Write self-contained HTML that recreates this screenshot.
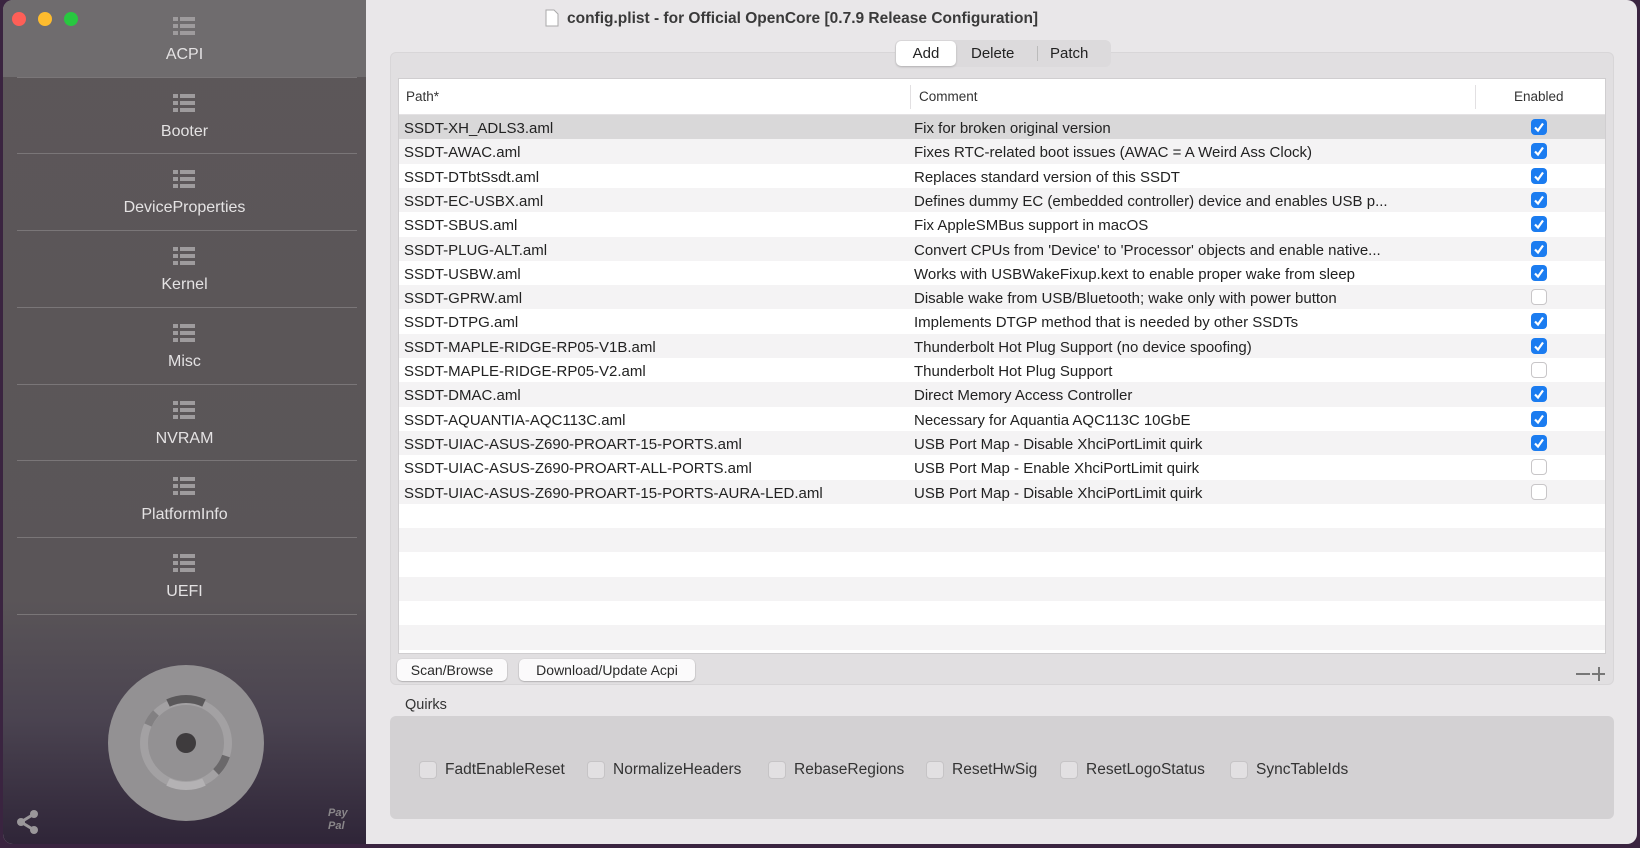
<!DOCTYPE html>
<html><head><meta charset="utf-8"><style>
*{box-sizing:border-box;margin:0;padding:0}
body{width:1640px;height:848px;overflow:hidden;background:#3a2440;font-family:"Liberation Sans",sans-serif;position:relative}
.a{position:absolute}
#win{left:3px;top:0;width:1634px;height:844px;border-radius:10px;overflow:hidden;background:#e9e7e9}
#side{left:0;top:0;width:363px;height:844px;background:linear-gradient(#5c5759 0,#5a5558 600px,#4a4350 720px,#2f2538 844px)}
.item{position:absolute;left:0;width:363px;height:77px;color:#e4e2e3;font-size:16px;text-align:center}
.item .lbl{position:absolute;left:0;right:0;top:46px}
.item .ic{position:absolute;left:170px;top:16px;width:22px;height:20px}
.sep{position:absolute;left:14px;width:340px;height:1px;background:#7a7678}
.tl{position:absolute;top:12px;width:14px;height:14px;border-radius:50%}
.row{position:absolute;left:0;width:1208px;height:24.3px;font-size:15px;color:#222;line-height:24.3px}
.row .p{position:absolute;left:5px;top:2px}
.row .c{position:absolute;left:515px;top:2px;white-space:nowrap}
.cb{position:absolute;left:1132px;top:4px;width:16px;height:16px;border-radius:4px}
.on{background:#1b7cf0}
.off{background:#fff;border:1px solid #c8c6c8}
.btn{position:absolute;top:659px;height:22px;background:#fbfafb;border-radius:5px;box-shadow:0 0.5px 1.5px rgba(0,0,0,.35);font-size:14px;color:#2a2a2a;text-align:center;line-height:22px}
.q{position:absolute;top:761px;font-size:15.5px;color:#333;line-height:18px;padding-left:26px}
.q:before{content:"";position:absolute;left:0;top:0;width:16px;height:16px;border-radius:4px;background:#e2e0e2;border:1px solid #c6c4c6}
</style></head><body>
<div id="win" class="a">
<div id="side" class="a">
 <div class="a" style="left:0;top:0;width:363px;height:77px;background:#6f6c6e"></div>
 <div class="tl" style="left:9px;background:#fe5f57"></div>
 <div class="tl" style="left:35px;background:#febc2e"></div>
 <div class="tl" style="left:61px;background:#28c840"></div>
 <div id="items"></div>
 <svg class="a" style="left:103px;top:663px" width="160" height="160" viewBox="0 0 160 160">
  <circle cx="80" cy="80" r="78" fill="#939193"/>
  <circle cx="80" cy="80" r="42" fill="none" stroke="#a3a1a3" stroke-width="8"/>
  <path d="M62 40 A42 42 0 0 1 98 40" fill="none" stroke="#5a585a" stroke-width="8"/>
  <path d="M62 119 A42 42 0 0 0 98 119" fill="none" stroke="#b4b2b4" stroke-width="8"/>
  <path d="M42 62 A42 42 0 0 1 50 50" fill="none" stroke="#828082" stroke-width="8"/>
  <path d="M120 93 A42 42 0 0 1 110 109" fill="none" stroke="#6a686a" stroke-width="8"/>
  <circle cx="80" cy="80" r="10" fill="#3e3b3d"/>
 </svg>
 <svg class="a" style="left:13px;top:810px" width="24" height="24" viewBox="0 0 24 24"><circle cx="5" cy="12" r="4" fill="#9a979a"/><circle cx="18" cy="4" r="4" fill="#9a979a"/><circle cx="18" cy="20" r="4" fill="#9a979a"/><path d="M5 12L18 4M5 12L18 20" stroke="#9a979a" stroke-width="3"/></svg>
 <div class="a" style="left:325px;top:807px;font-size:11px;font-style:italic;color:#8a878a;line-height:13px;font-weight:bold">Pay<br>Pal</div>
</div>
<svg class="a" style="left:542px;top:9px" width="14" height="18"><path d="M1 1h8l4 4v12H1z" fill="#fff" stroke="#aaa"/></svg>
<div class="a" style="left:564px;top:10px;font-size:15.5px;font-weight:bold;color:#3a3a3a">config.plist - for Official OpenCore [0.7.9 Release Configuration]</div>
<div class="a" style="left:387px;top:52px;width:1224px;height:633px;background:#e1dfe1;border-radius:6px;border:1px solid #d8d6d8"></div>
<div class="a" style="left:892px;top:40px;width:216px;height:27px;background:#dcdadc;border-radius:6px"></div>
<div class="a" style="left:893px;top:41px;width:60px;height:25px;background:#fff;border-radius:5px;box-shadow:0 1px 2px rgba(0,0,0,.2);font-size:15px;text-align:center;line-height:25px;color:#222">Add</div>
<div class="a" style="left:968px;top:41px;font-size:15px;line-height:25px;color:#222">Delete</div>
<div class="a" style="left:1034px;top:46px;width:1px;height:15px;background:#bbb"></div>
<div class="a" style="left:1047px;top:41px;font-size:15px;line-height:25px;color:#222">Patch</div>
<div class="a" style="left:395px;top:78px;width:1208px;height:576px;background:#fff;border:1px solid #d0ced0;overflow:hidden">
 <div class="a" style="left:0;top:0;width:1208px;height:36px;background:#fff;border-bottom:1px solid #e4e2e4;font-size:13.5px;color:#333;line-height:36px">
  <span class="a" style="left:7px">Path*</span>
  <div class="a" style="left:511px;top:6px;width:1px;height:24px;background:#e2e0e2"></div>
  <span class="a" style="left:520px">Comment</span>
  <div class="a" style="left:1076px;top:6px;width:1px;height:24px;background:#e2e0e2"></div>
  <span class="a" style="left:1115px">Enabled</span>
 </div>
 <div id="rows" class="a" style="left:0;top:36px;width:1208px;height:540px"></div>
</div>
<div class="btn" style="left:394px;width:110px">Scan/Browse</div>
<div class="btn" style="left:516px;width:176px">Download/Update Acpi</div>
<div class="a" style="left:1573px;top:673px;width:14px;height:1.5px;background:#777"></div>
<div class="a" style="left:1589px;top:673px;width:13px;height:1.5px;background:#777"></div>
<div class="a" style="left:1595px;top:667px;width:1.5px;height:14px;background:#777"></div>
<div class="a" style="left:402px;top:697px;font-size:14.5px;color:#333">Quirks</div>
<div class="a" style="left:387px;top:716px;width:1224px;height:103px;background:#d3d1d3;border-radius:6px"></div>
<div class="q" style="left:416px">FadtEnableReset</div>
<div class="q" style="left:584px">NormalizeHeaders</div>
<div class="q" style="left:765px">RebaseRegions</div>
<div class="q" style="left:923px">ResetHwSig</div>
<div class="q" style="left:1057px">ResetLogoStatus</div>
<div class="q" style="left:1227px">SyncTableIds</div>
</div>
<script>
var names=["ACPI","Booter","DeviceProperties","Kernel","Misc","NVRAM","PlatformInfo","UEFI"],h="";
names.forEach(function(n,i){var t=i*76.7;
h+='<div class="item" style="top:'+t+'px"><svg class="ic" viewBox="0 0 22 20"><g fill="#9e9b9d"><rect x="0" y="1" width="5" height="4"/><rect x="7" y="1" width="15" height="4"/><rect x="0" y="8" width="5" height="4"/><rect x="7" y="8" width="15" height="4"/><rect x="0" y="15" width="5" height="4"/><rect x="7" y="15" width="15" height="4"/></g></svg><div class="lbl">'+n+'</div></div>';
h+='<div class="sep" style="top:'+(t+76.7)+'px"></div>';});
document.getElementById("items").innerHTML=h;
var R=[["SSDT-XH_ADLS3.aml","Fix for broken original version",1],["SSDT-AWAC.aml","Fixes RTC-related boot issues (AWAC = A Weird Ass Clock)",1],["SSDT-DTbtSsdt.aml","Replaces standard version of this SSDT",1],["SSDT-EC-USBX.aml","Defines dummy EC (embedded controller) device and enables USB p...",1],["SSDT-SBUS.aml","Fix AppleSMBus support in macOS",1],["SSDT-PLUG-ALT.aml","Convert CPUs from 'Device' to 'Processor' objects and enable native...",1],["SSDT-USBW.aml","Works with USBWakeFixup.kext to enable proper wake from sleep",1],["SSDT-GPRW.aml","Disable wake from USB/Bluetooth; wake only with power button",0],["SSDT-DTPG.aml","Implements DTGP method that is needed by other SSDTs",1],["SSDT-MAPLE-RIDGE-RP05-V1B.aml","Thunderbolt Hot Plug Support (no device spoofing)",1],["SSDT-MAPLE-RIDGE-RP05-V2.aml","Thunderbolt Hot Plug Support",0],["SSDT-DMAC.aml","Direct Memory Access Controller",1],["SSDT-AQUANTIA-AQC113C.aml","Necessary for Aquantia AQC113C 10GbE",1],["SSDT-UIAC-ASUS-Z690-PROART-15-PORTS.aml","USB Port Map - Disable XhciPortLimit quirk",1],["SSDT-UIAC-ASUS-Z690-PROART-ALL-PORTS.aml","USB Port Map - Enable XhciPortLimit quirk",0],["SSDT-UIAC-ASUS-Z690-PROART-15-PORTS-AURA-LED.aml","USB Port Map - Disable XhciPortLimit quirk",0]];
h="";for(var i=0;i<23;i++){var bg=i==0?"#d9d8d9":(i%2?"#f4f3f4":"#fff");var r=R[i];
h+='<div class="row" style="top:'+(i*24.3)+'px;background:'+bg+'">'+(r?'<span class="p">'+r[0]+'</span><span class="c">'+r[1]+'</span><div class="cb '+(r[2]?'on':'off')+'">'+(r[2]?'<svg width="16" height="16"><path d="M4 8.5l3 3 5-7" stroke="#fff" stroke-width="2.2" fill="none"/></svg>':'')+'</div>':'')+'</div>';}
document.getElementById("rows").innerHTML=h;
</script>
</body></html>
